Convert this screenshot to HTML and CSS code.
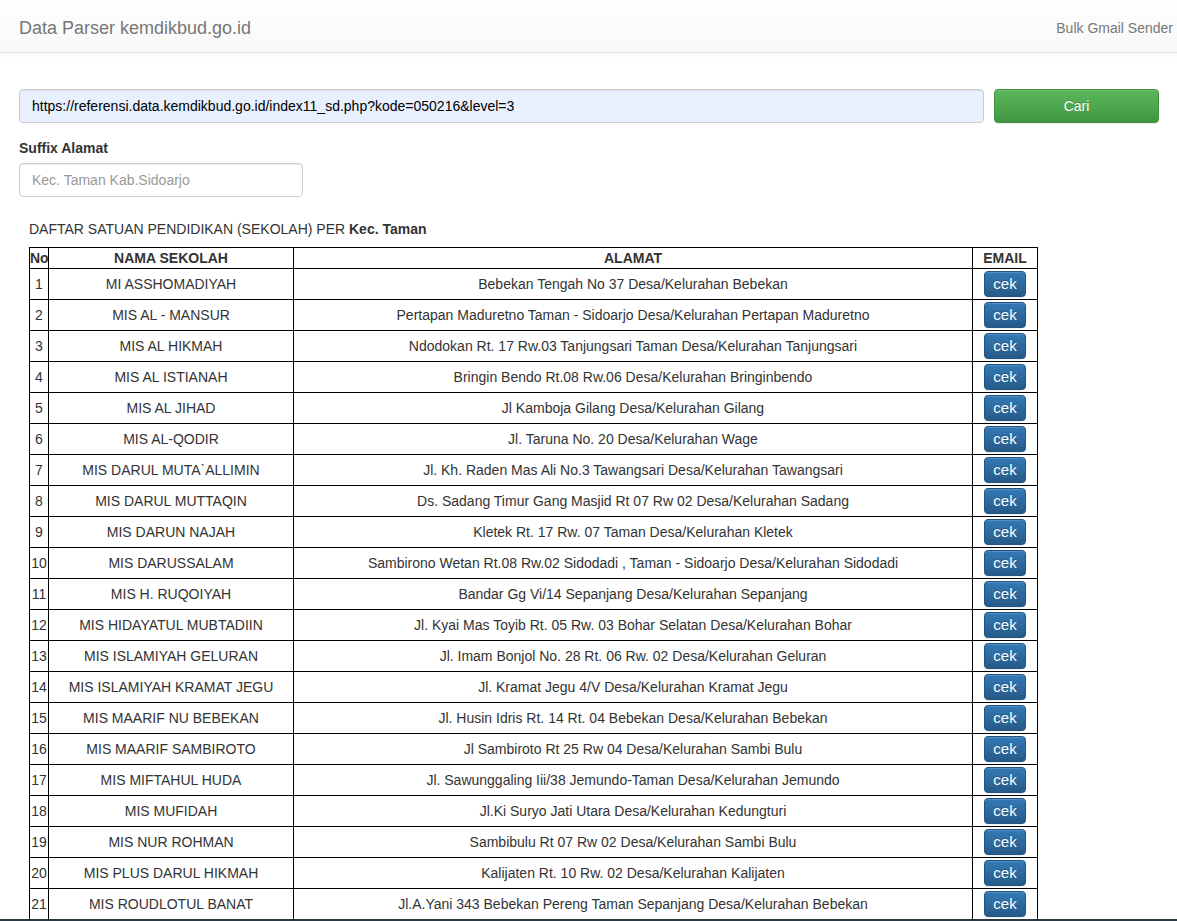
FILE: index.html
```html
<!DOCTYPE html>
<html lang="id">
<head>
<meta charset="utf-8">
<title>Data Parser kemdikbud.go.id</title>
<link rel="stylesheet" href="styles.css">
</head>
<body>
<nav class="navbar">
  <a class="brand" href="#">Data Parser kemdikbud.go.id</a>
  <a class="nav-link" href="#">Bulk Gmail Sender</a>
</nav>
<main class="main">
  <form class="search-row">
    <input class="form-control url-input" type="text" value="https://referensi.data.kemdikbud.go.id/index11_sd.php?kode=050216&amp;level=3">
    <button class="btn btn-success" type="button">Cari</button>
  </form>
  <label class="field-label">Suffix Alamat</label>
  <input class="form-control suffix-input" type="text" placeholder="Kec. Taman Kab.Sidoarjo">
  <div class="result">
    <p class="title">DAFTAR SATUAN PENDIDIKAN (SEKOLAH) PER <b>Kec. Taman</b></p>
    <table class="data-table">
      <colgroup>
        <col class="c-no"><col class="c-nama"><col class="c-alamat"><col class="c-email">
      </colgroup>
      <thead>
        <tr><th>No</th><th>NAMA SEKOLAH</th><th>ALAMAT</th><th>EMAIL</th></tr>
      </thead>
      <tbody>
        <tr><td>1</td><td>MI ASSHOMADIYAH</td><td>Bebekan Tengah No 37 Desa/Kelurahan Bebekan</td><td><button class="btn btn-primary">cek</button></td></tr>
        <tr><td>2</td><td>MIS AL - MANSUR</td><td>Pertapan Maduretno Taman - Sidoarjo Desa/Kelurahan Pertapan Maduretno</td><td><button class="btn btn-primary">cek</button></td></tr>
        <tr><td>3</td><td>MIS AL HIKMAH</td><td>Ndodokan Rt. 17 Rw.03 Tanjungsari Taman Desa/Kelurahan Tanjungsari</td><td><button class="btn btn-primary">cek</button></td></tr>
        <tr><td>4</td><td>MIS AL ISTIANAH</td><td>Bringin Bendo Rt.08 Rw.06 Desa/Kelurahan Bringinbendo</td><td><button class="btn btn-primary">cek</button></td></tr>
        <tr><td>5</td><td>MIS AL JIHAD</td><td>Jl Kamboja Gilang Desa/Kelurahan Gilang</td><td><button class="btn btn-primary">cek</button></td></tr>
        <tr><td>6</td><td>MIS AL-QODIR</td><td>Jl. Taruna No. 20 Desa/Kelurahan Wage</td><td><button class="btn btn-primary">cek</button></td></tr>
        <tr><td>7</td><td>MIS DARUL MUTA`ALLIMIN</td><td>Jl. Kh. Raden Mas Ali No.3 Tawangsari Desa/Kelurahan Tawangsari</td><td><button class="btn btn-primary">cek</button></td></tr>
        <tr><td>8</td><td>MIS DARUL MUTTAQIN</td><td>Ds. Sadang Timur Gang Masjid Rt 07 Rw 02 Desa/Kelurahan Sadang</td><td><button class="btn btn-primary">cek</button></td></tr>
        <tr><td>9</td><td>MIS DARUN NAJAH</td><td>Kletek Rt. 17 Rw. 07 Taman Desa/Kelurahan Kletek</td><td><button class="btn btn-primary">cek</button></td></tr>
        <tr><td>10</td><td>MIS DARUSSALAM</td><td>Sambirono Wetan Rt.08 Rw.02 Sidodadi , Taman - Sidoarjo Desa/Kelurahan Sidodadi</td><td><button class="btn btn-primary">cek</button></td></tr>
        <tr><td>11</td><td>MIS H. RUQOIYAH</td><td>Bandar Gg Vi/14 Sepanjang Desa/Kelurahan Sepanjang</td><td><button class="btn btn-primary">cek</button></td></tr>
        <tr><td>12</td><td>MIS HIDAYATUL MUBTADIIN</td><td>Jl. Kyai Mas Toyib Rt. 05 Rw. 03 Bohar Selatan Desa/Kelurahan Bohar</td><td><button class="btn btn-primary">cek</button></td></tr>
        <tr><td>13</td><td>MIS ISLAMIYAH GELURAN</td><td>Jl. Imam Bonjol No. 28 Rt. 06 Rw. 02 Desa/Kelurahan Geluran</td><td><button class="btn btn-primary">cek</button></td></tr>
        <tr><td>14</td><td>MIS ISLAMIYAH KRAMAT JEGU</td><td>Jl. Kramat Jegu 4/V Desa/Kelurahan Kramat Jegu</td><td><button class="btn btn-primary">cek</button></td></tr>
        <tr><td>15</td><td>MIS MAARIF NU BEBEKAN</td><td>Jl. Husin Idris Rt. 14 Rt. 04 Bebekan Desa/Kelurahan Bebekan</td><td><button class="btn btn-primary">cek</button></td></tr>
        <tr><td>16</td><td>MIS MAARIF SAMBIROTO</td><td>Jl Sambiroto Rt 25 Rw 04 Desa/Kelurahan Sambi Bulu</td><td><button class="btn btn-primary">cek</button></td></tr>
        <tr><td>17</td><td>MIS MIFTAHUL HUDA</td><td>Jl. Sawunggaling Iii/38 Jemundo-Taman Desa/Kelurahan Jemundo</td><td><button class="btn btn-primary">cek</button></td></tr>
        <tr><td>18</td><td>MIS MUFIDAH</td><td>Jl.Ki Suryo Jati Utara Desa/Kelurahan Kedungturi</td><td><button class="btn btn-primary">cek</button></td></tr>
        <tr><td>19</td><td>MIS NUR ROHMAN</td><td>Sambibulu Rt 07 Rw 02 Desa/Kelurahan Sambi Bulu</td><td><button class="btn btn-primary">cek</button></td></tr>
        <tr><td>20</td><td>MIS PLUS DARUL HIKMAH</td><td>Kalijaten Rt. 10 Rw. 02 Desa/Kelurahan Kalijaten</td><td><button class="btn btn-primary">cek</button></td></tr>
        <tr><td>21</td><td>MIS ROUDLOTUL BANAT</td><td>Jl.A.Yani 343 Bebekan Pereng Taman Sepanjang Desa/Kelurahan Bebekan</td><td><button class="btn btn-primary">cek</button></td></tr>
      </tbody>
    </table>
  </div>
</main>
<div class="window-edge"></div>
</body>
</html>
```
FILE: styles.css
```css
* { box-sizing: border-box; }
html, body { margin: 0; padding: 0; }
body {
  font-family: "Liberation Sans", Arial, Helvetica, sans-serif;
  font-size: 14px;
  line-height: 20px;
  color: #333;
  background: #fff;
}
.navbar {
  height: 53px;
  display: flex;
  align-items: center;
  justify-content: space-between;
  padding: 4px 4px 0 19px;
  background-image: linear-gradient(to bottom, #fff 0, #f8f8f8 100%);
  border-bottom: 1px solid #e7e7e7;
  box-shadow: inset 0 1px 0 rgba(255,255,255,.15), 0 1px 5px rgba(0,0,0,.075);
}
.brand {
  font-size: 18px;
  line-height: 20px;
  color: #777;
  text-decoration: none;
  text-shadow: 0 1px 0 rgba(255,255,255,.25);
}
.nav-link {
  font-size: 14px;
  color: #777;
  text-decoration: none;
  text-shadow: 0 1px 0 rgba(255,255,255,.25);
}
.main {
  padding: 36px 18px 0 19px;
}
.search-row {
  display: flex;
  gap: 10px;
  margin: 0;
}
.form-control {
  display: block;
  height: 34px;
  padding: 6px 12px;
  font-family: inherit;
  font-size: 14px;
  line-height: 20px;
  color: #555;
  background: #fff;
  border: 1px solid #ccc;
  border-radius: 4px;
  box-shadow: inset 0 1px 1px rgba(0,0,0,.075);
  outline: none;
}
.form-control::placeholder { color: #999; }
.url-input {
  width: 965px;
  background: #e8f0fe;
  color: #000;
}
.btn {
  font-family: inherit;
  font-size: 14px;
  line-height: 20px;
  color: #fff;
  border-radius: 4px;
  border: 1px solid transparent;
  cursor: pointer;
  text-shadow: 0 -1px 0 rgba(0,0,0,.2);
  box-shadow: inset 0 1px 0 rgba(255,255,255,.15), 0 1px 1px rgba(0,0,0,.075);
}
.btn-success {
  width: 165px;
  height: 34px;
  padding: 6px 12px;
  background-image: linear-gradient(to bottom, #5cb85c 0, #419641 100%);
  border-color: #3e8f3e;
}
.btn-primary {
  width: 42px;
  height: 26px;
  padding: 2px 0;
  font-size: 15px;
  background-image: linear-gradient(to bottom, #337ab7 0, #265a88 100%);
  border-color: #245580;
  vertical-align: middle;
}
.field-label {
  display: block;
  font-weight: bold;
  margin: 15px 0 5px;
}
.suffix-input { width: 284px; }
.result { padding-left: 10px; }
.title {
  margin: 22px 0 8px;
  line-height: 20px;
}
.data-table {
  border-collapse: collapse;
  table-layout: fixed;
  width: 1008px;
}
.c-no { width: 19px; }
.c-nama { width: 245px; }
.c-alamat { width: 679px; }
.c-email { width: 65px; }
.data-table th,
.data-table td {
  border: 1px solid #000;
  text-align: center;
  vertical-align: middle;
  white-space: nowrap;
  overflow: hidden;
}
.data-table th {
  padding: 0;
  height: 21px;
  font-weight: bold;
}
.data-table td {
  padding: 2px 0;
  height: 31px;
}
.window-edge {
  position: fixed;
  left: 0;
  right: 0;
  bottom: 0;
  height: 2px;
  background: #2b3a42;
}
```
